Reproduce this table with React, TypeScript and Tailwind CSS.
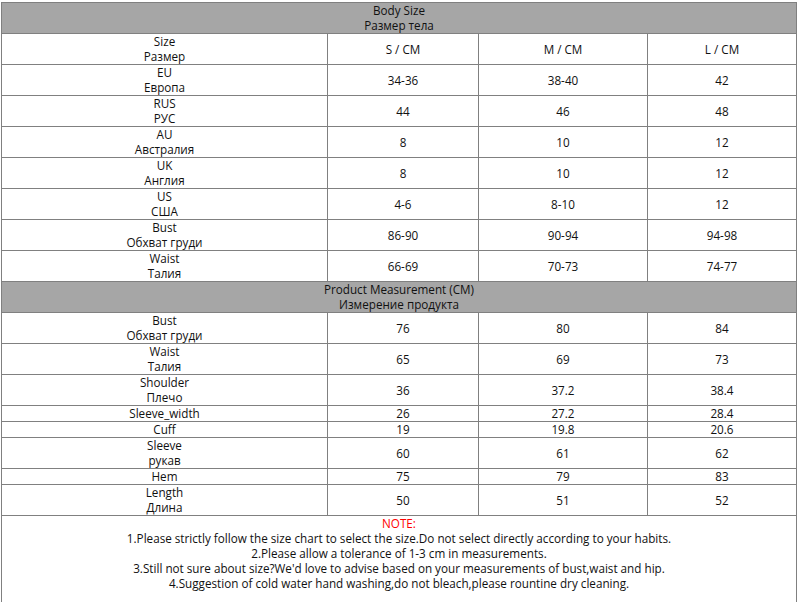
import React from 'react';

type Row = { en: string; ru?: string; s: string; m: string; l: string };

const bodyRows: Row[] = [
    { en: 'Size', ru: 'Размер', s: 'S / CM', m: 'M / CM', l: 'L / CM' },
    { en: 'EU', ru: 'Европа', s: '34-36', m: '38-40', l: '42' },
    { en: 'RUS', ru: 'РУС', s: '44', m: '46', l: '48' },
    { en: 'AU', ru: 'Австралия', s: '8', m: '10', l: '12' },
    { en: 'UK', ru: 'Англия', s: '8', m: '10', l: '12' },
    { en: 'US', ru: 'США', s: '4-6', m: '8-10', l: '12' },
    { en: 'Bust', ru: 'Обхват груди', s: '86-90', m: '90-94', l: '94-98' },
    { en: 'Waist', ru: 'Талия', s: '66-69', m: '70-73', l: '74-77' },
];

const productRows: Row[] = [
    { en: 'Bust', ru: 'Обхват груди', s: '76', m: '80', l: '84' },
    { en: 'Waist', ru: 'Талия', s: '65', m: '69', l: '73' },
    { en: 'Shoulder', ru: 'Плечо', s: '36', m: '37.2', l: '38.4' },
    { en: 'Sleeve_width', s: '26', m: '27.2', l: '28.4' },
    { en: 'Cuff', s: '19', m: '19.8', l: '20.6' },
    { en: 'Sleeve', ru: 'рукав', s: '60', m: '61', l: '62' },
    { en: 'Hem', s: '75', m: '79', l: '83' },
    { en: 'Length', ru: 'Длина', s: '50', m: '51', l: '52' },
];

const notes = [
    '1.Please strictly follow the size chart to select the size.Do not select directly according to your habits.',
    '2.Please allow a tolerance of 1-3 cm in measurements.',
    "3.Still not sure about size?We'd love to advise based on your measurements of bust,waist and hip.",
    '4.Suggestion of cold water hand washing,do not bleach,please rountine dry cleaning.',
];

const cell = 'border border-[#808080] p-0 text-center align-middle font-normal';

const SectionHeader = ({ en, ru }: { en: string; ru: string }) => (
    <tr className="bg-[#a6a6a6]">
        <td colSpan={4} className={cell}>
            {en}
            <br />
            {ru}
        </td>
    </tr>
);

const DataRow = ({ row }: { row: Row }) => (
    <tr>
        <td className={cell}>
            {row.en}
            {row.ru && (
                <>
                    <br />
                    {row.ru}
                </>
            )}
        </td>
        <td className={cell}>{row.s}</td>
        <td className={cell}>{row.m}</td>
        <td className={cell}>{row.l}</td>
    </tr>
);

export default function App() {
    return (
        <div className="w-[798px] h-[602px] overflow-hidden bg-white pt-[2px] pl-[1px]">
            <table
                className="w-[795px] table-fixed border-collapse text-[11.7px] leading-[15px] text-[#111]"
                style={{ fontFamily: '"Open Sans", "Noto Sans", sans-serif' }}
            >
                <colgroup>
                    <col className="w-[326px]" />
                    <col className="w-[151px]" />
                    <col className="w-[169px]" />
                    <col className="w-[149px]" />
                </colgroup>
                <tbody>
                    <SectionHeader en="Body Size" ru="Размер тела" />
                    {bodyRows.map((r, i) => (
                        <DataRow key={'b' + i} row={r} />
                    ))}
                    <SectionHeader en="Product Measurement (CM)" ru="Измерение продукта" />
                    {productRows.map((r, i) => (
                        <DataRow key={'p' + i} row={r} />
                    ))}
                    <tr>
                        <td colSpan={4} className={cell + ' pb-[30px]'}>
                            <span className="text-[#ff0000]">NOTE:</span>
                            {notes.map((n, i) => (
                                <React.Fragment key={i}>
                                    <br />
                                    {n}
                                </React.Fragment>
                            ))}
                        </td>
                    </tr>
                </tbody>
            </table>
        </div>
    );
}
